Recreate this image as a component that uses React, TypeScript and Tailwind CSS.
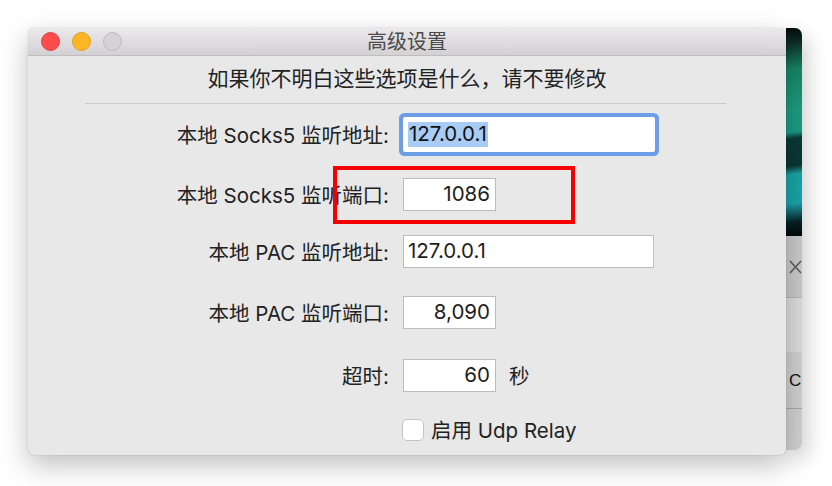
import React from "react";

function Row({
  label,
  mt,
  children,
}: {
  label: string;
  mt: string;
  children: React.ReactNode;
}) {
  return (
    <div className={`flex items-center ${mt}`}>
      <div className="w-[361px] text-right text-[20.5px] leading-none text-[#222222] pt-[3px]">{label}</div>
      <div className="ml-[14px] flex items-center">{children}</div>
    </div>
  );
}

function Field({ w, right, children }: { w: string; right?: boolean; children: React.ReactNode }) {
  return (
    <div
      className={`${w} h-[33px] bg-white border border-[#bcbcbc] flex items-center text-[20.5px] leading-none text-[#1e1e1e] ${
        right ? "justify-end pr-[5px]" : "justify-start pl-[4px]"
      }`}
    >
      {children}
    </div>
  );
}

export default function App() {
  return (
    <div className="w-[832px] h-[486px] bg-white overflow-hidden flex items-start pt-[28px] pl-[28px] font-['Inter','Noto_Sans_CJK_SC',sans-serif]">
      {/* main window */}
      <div className="relative z-10 w-[758px] h-[427px] rounded-[6px] bg-[#e8e8e8] shadow-[0_10px_28px_rgba(0,0,0,0.26),0_0_1px_rgba(0,0,0,0.35)] flex flex-col">
        {/* title bar */}
        <div className="h-[28px] rounded-t-[6px] bg-gradient-to-b from-[#ebe9eb] to-[#d3d1d3] border-b border-[#bdbdbd] grid grid-cols-[1fr_auto_1fr] items-center">
          <div className="flex items-center gap-[12px] pl-[13px]">
            <div className="w-[19px] h-[19px] rounded-full bg-[#fc4c4c] border border-[#e0403d]" />
            <div className="w-[19px] h-[19px] rounded-full bg-[#fdb526] border border-[#dfa022]" />
            <div className="w-[19px] h-[19px] rounded-full bg-[#d4d2d4] border border-[#bdbbbd]" />
          </div>
          <div className="text-[20px] leading-none text-[#4b4b4b] pt-[1px]">高级设置</div>
          <div />
        </div>

        {/* body */}
        <div className="flex flex-col">
          <div className="h-[42px] flex items-center justify-center text-[21px] leading-none text-[#222222] pt-[2px]">
            如果你不明白这些选项是什么，请不要修改
          </div>
          <div className="mt-[5px] ml-[57px] w-[641px] h-px bg-[#cbcbcb]" />

          <Row label="本地 Socks5 监听地址:" mt="mt-[13px]">
            <div className="w-[252px] h-[35px] bg-white rounded-[2px] shadow-[0_0_0_4px_#6c9de6] flex items-center pl-[5px]">
              <span className="bg-[#a8ccf5] text-[20.5px] leading-none text-[#111] px-[1px] h-[25px] flex items-center">127.0.0.1</span>
            </div>
          </Row>

          <Row label="本地 Socks5 监听端口:" mt="mt-[26px]">
            <Field w="w-[93px]" right>
              1086
            </Field>
          </Row>

          <Row label="本地 PAC 监听地址:" mt="mt-[24px]">
            <Field w="w-[251px]">127.0.0.1</Field>
          </Row>

          <Row label="本地 PAC 监听端口:" mt="mt-[28px]">
            <Field w="w-[93px]" right>
              8,090
            </Field>
          </Row>

          <Row label="超时:" mt="mt-[30px]">
            <Field w="w-[93px]" right>
              60
            </Field>
            <span className="ml-[13px] text-[20.5px] leading-none text-[#222222] pt-[3px]">秒</span>
          </Row>

          <div className="flex items-center mt-[26px] ml-[374px]">
            <div className="w-[22px] h-[22px] rounded-[5px] bg-white border border-[#c4c4c4]" />
            <span className="ml-[7px] text-[20.5px] leading-none text-[#222222] pt-[3px]">启用 Udp Relay</span>
          </div>
        </div>

        {/* red annotation */}
        <div className="absolute left-[305px] top-[138px] w-[242px] h-[58px] border-[4px] border-[#f50000]" />
      </div>

      {/* background window edge */}
      <div className="w-[16px] h-[422px] rounded-r-[7px] overflow-hidden flex flex-col shadow-[6px_8px_20px_rgba(0,0,0,0.18)]">
        <div className="h-[208px] bg-[linear-gradient(172deg,#060b09_0%,#0c2a22_7%,#178566_20%,#1d9c7f_40%,#1a9a86_50%,#0b3935_53%,#0a3532_66%,#18a3a2_70%,#1aa3aa_84%,#062024_93%,#03080a_100%)]" />
        <div className="h-[62px] bg-[#c9c9c9] border-b border-[#b3b3b3] flex items-center pl-[3px]">
          <svg width="13" height="14" viewBox="0 0 13 14">
            <path d="M1 1 L12 13 M12 1 L1 13" stroke="#5c5c5c" strokeWidth="1.6" fill="none" />
          </svg>
        </div>
        <div className="h-[54px] bg-[#dcdcdc]" />
        <div className="h-[57px] bg-[#cfcfcf] border-b border-[#a9a9a9] flex items-center pl-[3px] text-[17px] leading-none text-[#111] font-['Liberation_Sans',sans-serif]">
          C
        </div>
        <div className="flex-1 bg-[#d0d0d0]" />
      </div>
    </div>
  );
}
